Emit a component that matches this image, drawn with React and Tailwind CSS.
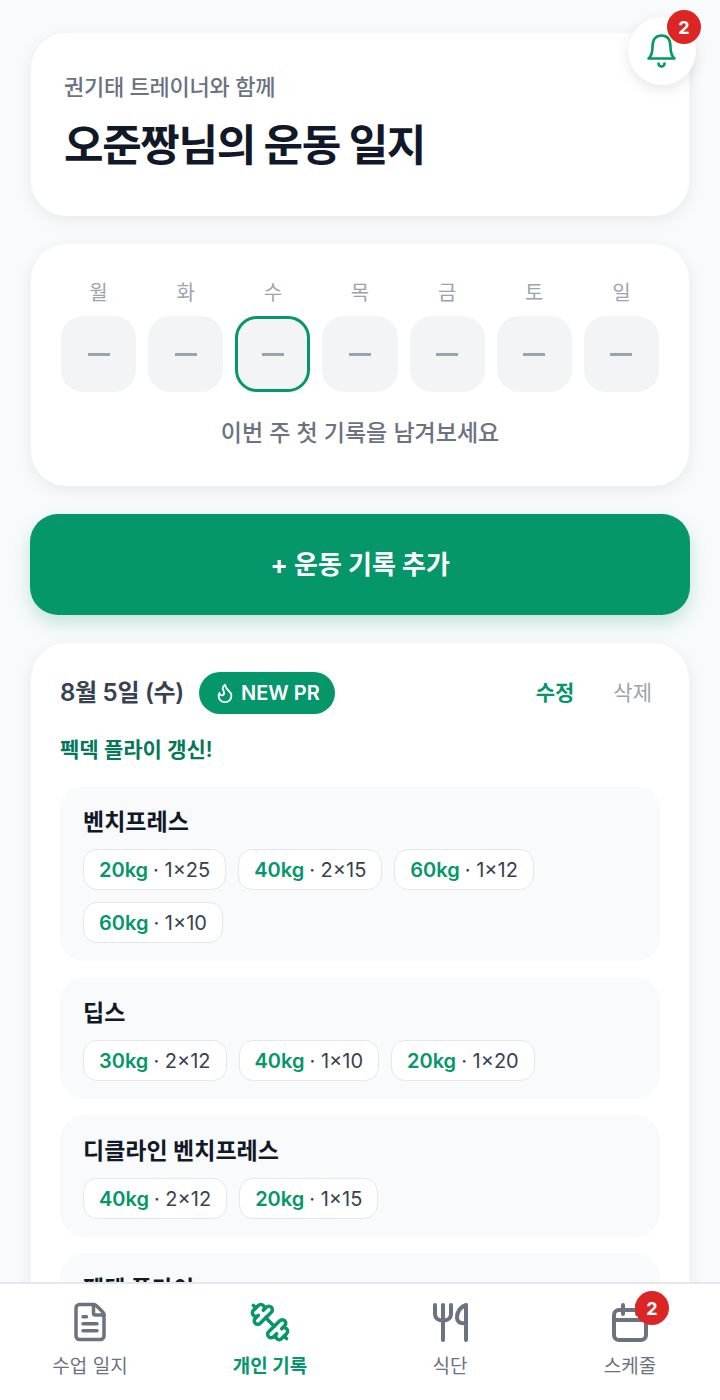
import { Flame, FileText, Dumbbell } from 'lucide-react'

const days = ['월', '화', '수', '목', '금', '토', '일']

const exercises = [
  { name: '벤치프레스', sets: [['20kg', '1×25'], ['40kg', '2×15'], ['60kg', '1×12'], ['60kg', '1×10']] },
  { name: '딥스', sets: [['30kg', '2×12'], ['40kg', '1×10'], ['20kg', '1×20']] },
  { name: '디클라인 벤치프레스', sets: [['40kg', '2×12'], ['20kg', '1×15']] },
  { name: '펙덱 플라이', sets: [['40kg', '2×12']] },
]

function BellIcon() {
  return (
    <svg width="34" height="36" viewBox="0 0 34 36" fill="none" stroke="#059669" strokeWidth="2.6" strokeLinecap="round" strokeLinejoin="round">
      <path d="M3.5 25.5C6.5 23 7.5 20 7.5 14C7.5 6 11 2.5 16.5 2.5C22 2.5 25.5 6 25.5 14C25.5 20 26.5 23 29.5 25.5Z" />
      <path d="M13.5 30.5a3 3 0 0 0 6 0" />
    </svg>
  )
}

function ForkKnife() {
  return (
    <svg width="44" height="44" viewBox="0 0 44 44" fill="none" stroke="currentColor" strokeWidth="4" strokeLinecap="round" strokeLinejoin="round">
      <path d="M7 5V14C7 18 10 20.5 15 20.5C20 20.5 23 18 23 14V5" />
      <path d="M15 5V40" />
      <path d="M38 5C32 7 29 12 29 18C29 21.5 32 23.5 38 23.5M38 5V40" />
    </svg>
  )
}

function CalendarIcon() {
  return (
    <svg width="44" height="44" viewBox="0 0 44 44" fill="none" stroke="currentColor" strokeWidth="4" strokeLinecap="round" strokeLinejoin="round">
      <rect x="6" y="10" width="32" height="30" rx="5" />
      <path d="M6 20H38M15 5V14M29 5V14" />
    </svg>
  )
}

const tabs = [
  { label: '수업 일지', icon: <FileText size={42} strokeWidth={2} /> },
  { label: '개인 기록', icon: <Dumbbell size={42} strokeWidth={2} className="-scale-x-100" />, active: true },
  { label: '식단', icon: <ForkKnife /> },
  { label: '스케줄', icon: <CalendarIcon />, badge: 2 },
]

export default function App() {
  return (
    <div className="relative flex h-[1400px] flex-col overflow-hidden bg-[#f8fafc] font-['Inter','Noto_Sans_CJK_KR',sans-serif]">
      {/* Bell */}
      <button className="absolute right-[24px] top-[17px] z-10 flex h-[68px] w-[68px] items-center justify-center rounded-full bg-white shadow-[0_4px_14px_rgba(0,0,0,0.1)]">
        <BellIcon />
        <span className="absolute right-[-5px] top-[-7px] flex h-[34px] w-[34px] items-center justify-center rounded-full bg-[#dc2626] text-[18px] font-bold text-white">2</span>
      </button>

      <main className="flex min-h-0 flex-1 flex-col gap-[28px] overflow-hidden px-[30px] pt-[33px]">
        {/* Header */}
        <section className="h-[183px] shrink-0 rounded-[36px] border-x border-[#f1f5f9] bg-white px-[33px] pt-[38px] shadow-[0_4px_16px_rgba(0,0,0,0.07)]">
          <p className="text-[22px] font-medium leading-[32px] tracking-[-0.25px] text-[#6b7280]">권기태 트레이너와 함께</p>
          <h1 className="mt-[14px] text-[43px] font-bold leading-[56px] tracking-[-1.4px] text-[#111827]">오준짱님의 운동 일지</h1>
        </section>

        {/* Week */}
        <section className="h-[242px] shrink-0 rounded-[36px] border-x border-[#f1f5f9] bg-white px-[30px] pt-[35px] shadow-[0_4px_16px_rgba(0,0,0,0.07)]">
          <div className="grid grid-cols-7 gap-[12px]">
            {days.map((d, i) => (
              <div key={d} className="flex flex-col items-center gap-[9px]">
                <span className="text-[20px] leading-[28px] text-[#9ca3af]">{d}</span>
                <div className={`flex h-[76px] w-full items-center justify-center rounded-[22px] bg-[#f3f4f6] ${i === 2 ? 'border-[3px] border-[#059669]' : ''}`}>
                  <span className="h-[3px] w-[22px] bg-[#9ca3af]"></span>
                </div>
              </div>
            ))}
          </div>
          <p className="mt-[24px] text-center text-[23px] font-medium leading-[34px] text-[#6b7280]">이번 주 첫 기록을 남겨보세요</p>
        </section>

        {/* Add */}
        <button className="h-[101px] shrink-0 rounded-[28px] bg-[#059669] text-[26px] font-bold text-white shadow-[0_8px_18px_rgba(5,150,105,0.22)]">+ 운동 기록 추가</button>

        {/* Log */}
        <section className="shrink-0 rounded-[36px] border-x border-[#f1f5f9] bg-white px-[29px] pt-[29px] pb-[30px] shadow-[0_4px_16px_rgba(0,0,0,0.07)]">
          <div className="flex items-center">
            <span className="text-[24px] font-semibold leading-[42px] tracking-[-0.3px] text-[#374151]">8월 5일 (수)</span>
            <span className="ml-[15px] flex h-[42px] items-center gap-[5px] rounded-full bg-[#059669] pl-[15px] pr-[15px] text-[20px] font-semibold text-white">
              <Flame size={22} strokeWidth={2} />
              NEW PR
            </span>
            <span className="ml-auto text-[21px] font-semibold text-[#059669]">수정</span>
            <span className="ml-[39px] mr-[8px] text-[21px] text-[#9ca3af]">삭제</span>
          </div>
          <p className="mt-[20px] text-[21px] font-semibold leading-[32px] text-[#047857]">펙덱 플라이 갱신!</p>
          <div className="mt-[20px] flex flex-col gap-[16px]">
            {exercises.map((ex) => (
              <div key={ex.name} className="rounded-[24px] bg-[#f8fafc] px-[23px] pt-[18px] pb-[18px]">
                <h3 className="text-[23px] font-bold leading-[36px] text-[#111827]">{ex.name}</h3>
                <div className="mt-[9px] flex flex-wrap gap-[12px]">
                  {ex.sets.map(([kg, reps], i) => (
                    <span key={i} className="flex h-[41px] items-center rounded-[14px] border-[1.5px] border-[#e5e7eb] bg-white px-[15px] text-[20px] text-[#374151]">
                      <b className="font-semibold text-[#059669]">{kg}</b>
                      <span className="ml-[5px]">· {reps}</span>
                    </span>
                  ))}
                </div>
              </div>
            ))}
          </div>
        </section>
      </main>

      {/* Bottom nav */}
      <nav className="z-10 grid h-[118px] shrink-0 grid-cols-4 border-t-2 border-[#e5e7eb] bg-white">
        {tabs.map((t) => (
          <div key={t.label} className={`flex flex-col items-center pt-[16px] ${t.active ? 'text-[#059669]' : 'text-[#6b7280]'}`}>
            <div className="relative flex h-[44px] w-[44px] items-center justify-center">
              {t.icon}
              {t.badge && (
                <span className="absolute right-[-17px] top-[-9px] flex h-[34px] w-[34px] items-center justify-center rounded-full bg-[#dc2626] text-[18px] font-bold text-white">{t.badge}</span>
              )}
            </div>
            <span className={`mt-[9px] text-[19px] leading-[28px] ${t.active ? 'font-bold' : 'font-normal'}`}>{t.label}</span>
          </div>
        ))}
      </nav>
    </div>
  )
}
